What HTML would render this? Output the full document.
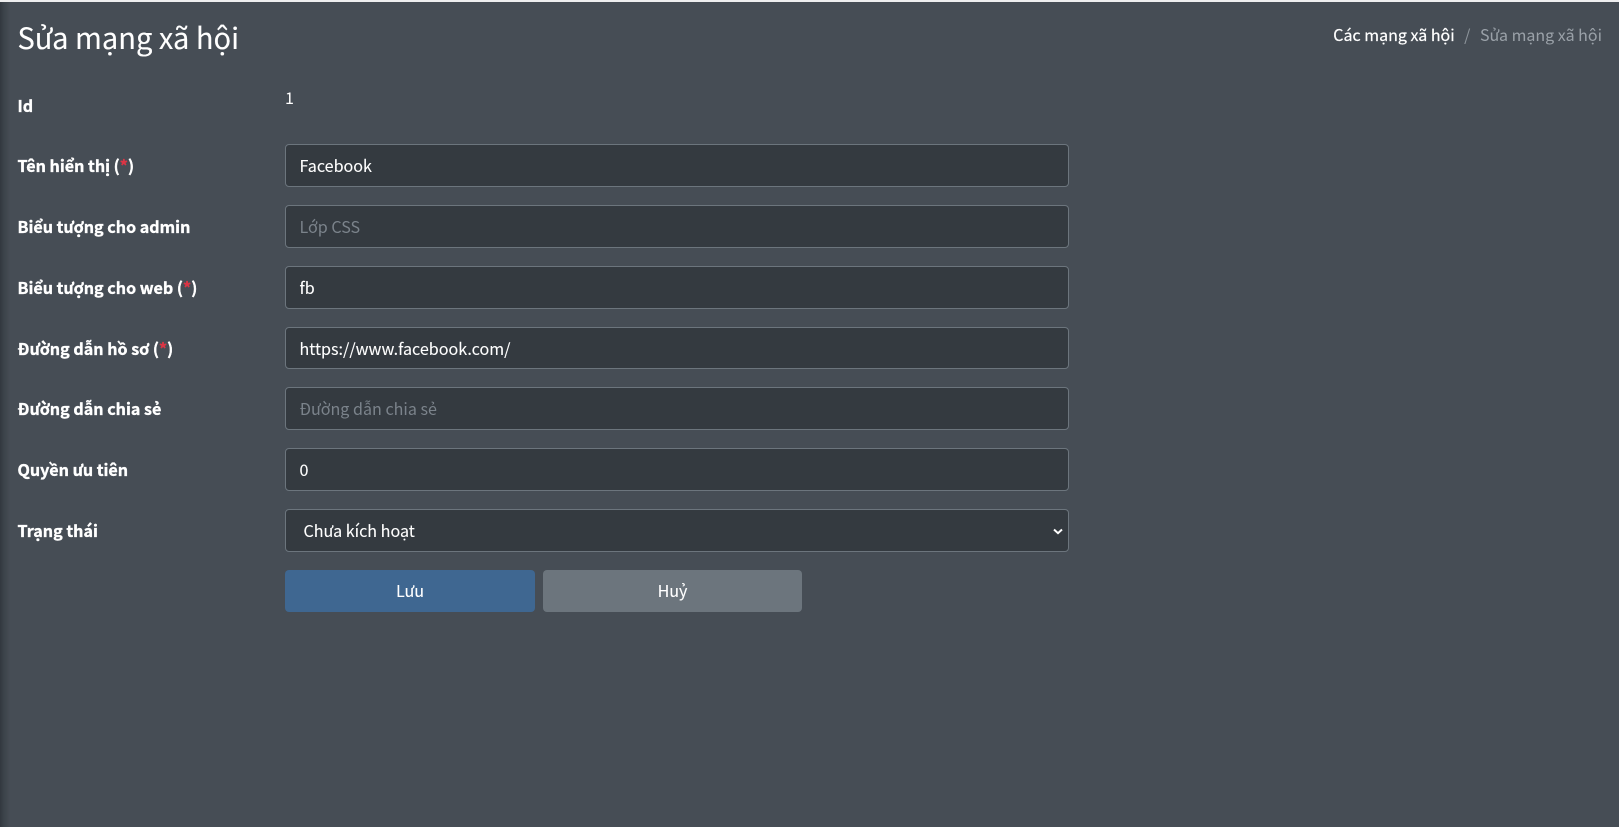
<!DOCTYPE html>
<html lang="vi">
<head>
<meta charset="utf-8">
<title>Sửa mạng xã hội</title>
<style>
html,body{margin:0;padding:0;width:1619px;height:827px;overflow:hidden;background:#464d55;}
body{position:relative;font-family:"Noto Sans CJK SC","Liberation Sans",sans-serif;color:#fff;font-size:16px;}
.top{position:absolute;left:0;top:0;width:1619px;height:2px;background:#eeeeef;}
.shadow{position:absolute;left:0;top:2px;width:10px;height:825px;background:linear-gradient(90deg,#32383f 0,#3c434a 40%,#464d55 100%);}
.abs{position:absolute;white-space:nowrap;}
h1{position:absolute;margin:0;left:17.5px;top:14px;font-size:29.05px;font-weight:400;line-height:46px;white-space:nowrap;-webkit-text-stroke:.1px #fff;}
.crumb{position:absolute;right:17px;top:21px;line-height:26px;font-size:16px;white-space:nowrap;color:#fff;-webkit-text-stroke:.2px #fff;}
.crumb span{color:#9aa1a8;-webkit-text-stroke:0;}
.crumb i{font-style:normal;color:#8d949b;padding:0 9.5px;-webkit-text-stroke:0;}
label{position:absolute;left:17.5px;font-weight:700;line-height:26px;white-space:nowrap;font-size:16.1px;-webkit-text-stroke:.35px #fff;}
label b{color:#dc3545;font-weight:700;-webkit-text-stroke:.35px #dc3545;}
.f{position:absolute;left:285px;width:784px;height:42.5px;box-sizing:border-box;background:#343a40;border:1px solid #6c757d;border-radius:4px;line-height:40.5px;padding-left:13.5px;white-space:nowrap;font-size:16.1px;-webkit-text-stroke:.1px #fff;}
.ph{color:#7b838b;-webkit-text-stroke:0;}
.btn{position:absolute;top:570px;height:42px;line-height:41.5px;text-align:center;border-radius:4px;font-size:16.1px;-webkit-text-stroke:.1px #fff;}
svg{position:absolute;right:5.5px;top:17.5px;}
</style>
</head>
<body>
<div class="top"></div>
<div class="shadow"></div>
<h1>Sửa mạng xã hội</h1>
<div class="crumb">Các mạng xã hội<i>/</i><span>Sửa mạng xã hội</span></div>

<label style="top:92px">Id</label>
<div class="abs" style="left:285px;top:84px;line-height:26px;font-size:16.1px">1</div>

<label style="top:151.5px">Tên hiển thị (<b>*</b>)</label>
<div class="f" style="top:144.3px">Facebook</div>

<label style="top:212.5px">Biểu tượng cho admin</label>
<div class="f ph" style="top:205.2px">Lớp CSS</div>

<label style="top:273.5px">Biểu tượng cho web (<b>*</b>)</label>
<div class="f" style="top:266.2px">fb</div>

<label style="top:334.5px">Đường dẫn hồ sơ (<b>*</b>)</label>
<div class="f" style="top:327px;height:42px;line-height:40.5px">https://www.facebook.com/</div>

<label style="top:394.5px">Đường dẫn chia sẻ</label>
<div class="f ph" style="top:387.4px">Đường dẫn chia sẻ</div>

<label style="top:455.5px">Quyền ưu tiên</label>
<div class="f" style="top:448.2px">0</div>

<label style="top:516.5px">Trạng thái</label>
<div class="f" style="top:509px;padding-left:17.5px">Chưa kích hoạt
<svg width="10" height="7" viewBox="0 0 10 7"><path d="M1 1.5 L5 5.2 L9 1.5" fill="none" stroke="#fff" stroke-width="2"/></svg>
</div>

<div class="btn" style="left:285px;width:250px;background:#3f6791">Lưu</div>
<div class="btn" style="left:543px;width:259px;background:#6c757d">Huỷ</div>
</body>
</html>
